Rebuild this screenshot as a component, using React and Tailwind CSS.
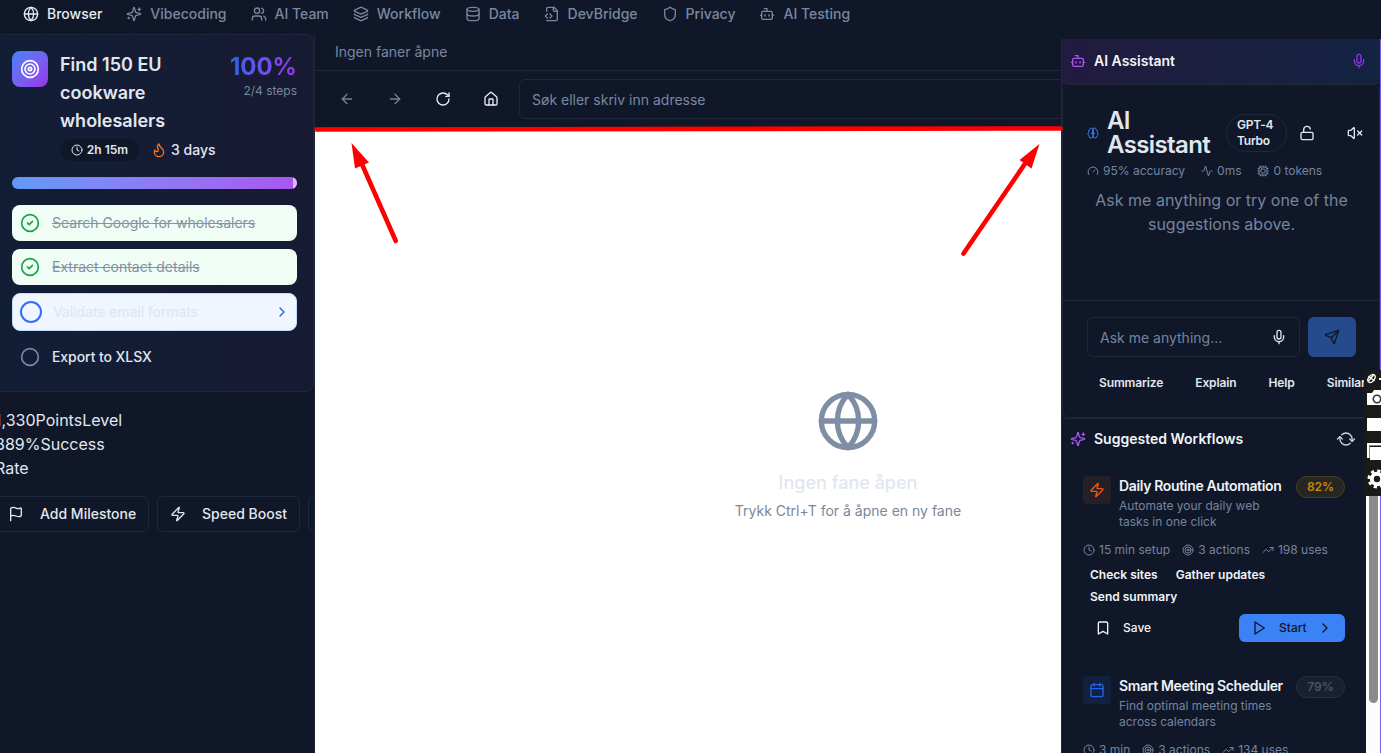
import React from "react";
import {
  Globe, Users, Layers, Database, Shield, Bot, Target, Clock, Flame,
  CircleCheck, Circle, ChevronRight, Flag, Zap, ArrowLeft, ArrowRight, RotateCw, Mic,
  LockOpen, VolumeX, Gauge, Activity, Cpu, Send, RefreshCw, TrendingUp, Bookmark, Calendar,
} from "lucide-react";

function Svg({ className, children }) {
  return (
    <svg viewBox="0 0 24 24" fill="none" stroke="currentColor" strokeWidth="2" strokeLinecap="round" strokeLinejoin="round" className={className}>
      {children}
    </svg>
  );
}

function Sparkles({ className }) {
  return (
    <Svg className={className}>
      <path d="M9.937 15.5A2 2 0 0 0 8.5 14.063l-6.135-1.582a.5.5 0 0 1 0-.962L8.5 9.936A2 2 0 0 0 9.937 8.5l1.582-6.135a.5.5 0 0 1 .963 0L14.063 8.5A2 2 0 0 0 15.5 9.937l6.135 1.581a.5.5 0 0 1 0 .964L15.5 14.063a2 2 0 0 0-1.437 1.437l-1.582 6.135a.5.5 0 0 1-.963 0z" />
      <path d="M20 3v4M22 5h-4M4 17v2M5 18H3" />
    </Svg>
  );
}

function FileCode({ className }) {
  return (
    <Svg className={className}>
      <path d="M4 22h14a2 2 0 0 0 2-2V7l-5-5H6a2 2 0 0 0-2 2v4" />
      <path d="M14 2v4a2 2 0 0 0 2 2h4M5 12l-3 3 3 3M9 18l3-3-3-3" />
    </Svg>
  );
}

function House({ className }) {
  return (
    <Svg className={className}>
      <path d="M15 21v-8a1 1 0 0 0-1-1h-4a1 1 0 0 0-1 1v8" />
      <path d="M3 10a2 2 0 0 1 .709-1.528l7-5.999a2 2 0 0 1 2.582 0l7 5.999A2 2 0 0 1 21 10v9a2 2 0 0 1-2 2H5a2 2 0 0 1-2-2z" />
    </Svg>
  );
}

function Brain({ className }) {
  return (
    <Svg className={className}>
      <path d="M12 5a3 3 0 1 0-5.997.125 4 4 0 0 0-2.526 5.77 4 4 0 0 0 .556 6.588A4 4 0 1 0 12 18Z" />
      <path d="M12 5a3 3 0 1 1 5.997.125 4 4 0 0 1 2.526 5.77 4 4 0 0 1-.556 6.588A4 4 0 1 1 12 18Z" />
      <path d="M15 13a4.5 4.5 0 0 1-3-4 4.5 4.5 0 0 1-3 4" />
    </Svg>
  );
}

function Play({ className }) {
  return (
    <Svg className={className}>
      <polygon points="6 3 20 12 6 21 6 3" />
    </Svg>
  );
}

const NAV = [
  [Globe, "Browser"], [Sparkles, "Vibecoding"], [Users, "AI Team"], [Layers, "Workflow"],
  [Database, "Data"], [FileCode, "DevBridge"], [Shield, "Privacy"], [Bot, "AI Testing"],
];

function TopNav() {
  return (
    <nav className="flex h-[34px] shrink-0 items-start gap-6 pl-[23px] pt-1 text-sm font-medium leading-5">
      {NAV.map(([Icon, label], i) => (
        <div key={label} className={i === 0 ? "flex items-center gap-2 text-[#e6ebf3]" : "flex items-center gap-2 text-[#7888a1]"}>
          <Icon className="size-4" />
          <span>{label}</span>
        </div>
      ))}
    </nav>
  );
}

function GoalCard() {
  return (
    <section className="flex h-[358px] w-[314px] flex-col rounded-r-lg border border-l-0 border-[#1d293b] bg-linear-to-r from-[#111e36] to-[#181a33] pl-3 pr-4 pt-4">
      <div className="flex items-start">
        <div className="flex size-9 shrink-0 items-center justify-center rounded-lg bg-linear-to-br from-[#3b82f6] to-[#9333ea] text-white">
          <Target className="size-5" />
        </div>
        <div className="ml-3 flex-1">
          <h2 className="w-[130px] text-lg font-semibold leading-7 text-[#e1e7ef]">Find 150 EU cookware wholesalers</h2>
          <div className="mt-1 flex items-center text-[#e1e7ef]">
            <span className="flex h-[22px] w-[79px] items-center justify-center gap-1 rounded-full bg-[#101728] text-xs font-semibold">
              <Clock className="size-3" />2h 15m
            </span>
            <span className="ml-3 flex items-center gap-1 text-sm font-medium">
              <Flame className="size-4 text-[#f97316]" />3 days
            </span>
          </div>
        </div>
        <div className="flex shrink-0 flex-col items-end">
          <span className="bg-linear-to-r from-[#2563eb] to-[#9333ea] bg-clip-text text-2xl font-bold leading-8 text-transparent">100%</span>
          <span className="text-xs leading-4 text-[#7888a1]">2/4 steps</span>
        </div>
      </div>
      <div className="mt-4 flex h-3 overflow-hidden rounded-full bg-linear-to-r from-[#609af8] to-[#a855f0]">
        <span className="ml-auto w-1 bg-[#dcb9f8]" />
      </div>
      <div className="mt-4 flex flex-col gap-2 text-sm leading-5">
        <div className="flex h-9 items-center gap-3 rounded-lg bg-[#f0fdf4] px-2 text-[#8591a7]">
          <CircleCheck className="size-5 text-[#16a34a]" /><span className="line-through">Search Google for wholesalers</span>
        </div>
        <div className="flex h-9 items-center gap-3 rounded-lg bg-[#f0fdf4] px-2 text-[#8591a7]">
          <CircleCheck className="size-5 text-[#16a34a]" /><span className="line-through">Extract contact details</span>
        </div>
        <div className="flex h-[38px] items-center rounded-lg border border-[#bfdbfe] bg-[#eff6ff] px-2 text-[#e1e7ef]">
          <span className="-ml-px size-[22px] rounded-full border-[2.5px] border-[#356fee]" /><span className="ml-[11px] font-medium tracking-[-0.01em]">Validate email formats</span>
          <ChevronRight className="-mr-0.5 ml-auto size-4 text-[#2563eb]" />
        </div>
        <div className="flex h-9 items-center gap-3 px-2 font-medium tracking-[-0.005em] text-[#e1e7ef]">
          <Circle className="size-5 text-[#7888a1]" /><span>Export to XLSX</span>
        </div>
      </div>
    </section>
  );
}

function LeftPanel() {
  return (
    <aside className="w-[315px] shrink-0 overflow-hidden border-r border-[#1a2637] text-[#e1e7ef]">
      <GoalCard />
      <div className="mt-4 text-base leading-6">
        <p className="-ml-[5px]"><span className="text-[#d99032]">1</span>,330PointsLevel</p>
        <p className="-ml-[5px]">889%Success</p>
        <p className="-ml-[5px]">Rate</p>
      </div>
      <div className="-ml-2 mt-4 flex gap-2 text-sm font-medium">
        <button className="flex h-9 w-[157px] shrink-0 items-center rounded-md border border-[#1d293b] pl-[15px]">
          <Flag className="size-4" /><span className="ml-4">Add Milestone</span>
        </button>
        <button className="flex h-9 w-[143px] shrink-0 items-center rounded-md border border-[#1d293b] pl-3">
          <Zap className="size-4" /><span className="ml-4">Speed Boost</span>
        </button>
        <button className="h-9 w-32 shrink-0 rounded-md border border-[#1d293b]" aria-label="More" />
      </div>
    </aside>
  );
}

function BrowserPane() {
  return (
    <main className="flex min-w-0 flex-1 flex-col overflow-hidden">
      <div className="flex h-[37px] shrink-0 items-center border-b border-[#1d293b] px-5 text-sm text-[#7888a1]">Ingen faner åpne</div>
      <div className="flex h-[57px] shrink-0 items-center border-b border-[#1d293b] pl-3">
        <span className="flex w-12 shrink-0 pl-3 text-[#778191]"><ArrowLeft className="size-4" /></span>
        <span className="flex w-12 shrink-0 pl-3 text-[#778191]"><ArrowRight className="size-4" /></span>
        <span className="flex w-12 shrink-0 pl-3 text-[#e8edf4]"><RotateCw className="size-4" /></span>
        <span className="flex w-12 shrink-0 pl-3 text-[#e8edf4]"><House className="size-4" /></span>
        <div className="flex h-10 w-[560px] shrink-0 items-center rounded-md border border-[#1d293b] px-3 pt-0.5 text-sm text-[#7888a1]">Søk eller skriv inn adresse</div>
      </div>
      <div className="flex flex-1 flex-col items-center bg-white pl-80 pt-[261px]">
        <Globe className="size-16 text-[#7f8ea5]" />
        <h3 className="mt-4 text-lg font-medium leading-7 text-[#e1e7ef]">Ingen fane åpen</h3>
        <p className="mt-1 text-sm leading-5 text-[#7b8799]">Trykk Ctrl+T for å åpne en ny fane</p>
      </div>
    </main>
  );
}

function AssistantCard() {
  return (
    <section className="flex h-[334px] flex-col rounded-lg border border-[#1d293b]">
      <div className="flex h-[215px] shrink-0 flex-col px-6 pt-6">
        <div className="flex h-12 items-center">
          <Brain className="size-3 shrink-0 text-[#3b82f6]" />
          <h2 className="ml-2 w-[105px] shrink-0 text-2xl font-semibold leading-none tracking-tight text-[#e1e7ef]">AI Assistant</h2>
          <span className="ml-[14px] flex h-[38px] w-[61px] shrink-0 items-center rounded-full border border-[#1d293b] pl-[10px] text-xs font-semibold leading-4 tracking-[-0.02em] text-[#e1e7ef]">GPT-4<br />Turbo</span>
          <LockOpen className="ml-3 size-4 shrink-0 text-[#e1e7ef]" />
          <VolumeX className="ml-8 size-4 shrink-0 text-[#e1e7ef]" />
        </div>
        <div className="mt-1.5 flex h-4 items-center gap-4 whitespace-nowrap text-xs text-[#7484a0]">
          <span className="flex items-center gap-1"><Gauge className="size-3" />95% accuracy</span>
          <span className="flex items-center gap-1"><Activity className="size-3" />0ms</span>
          <span className="flex items-center gap-1"><Cpu className="size-3" />0 tokens</span>
        </div>
        <p className="-mr-px ml-0 mt-[9px] text-center text-base leading-6 text-[#7484a0]">Ask me anything or try one of the suggestions above.</p>
      </div>
      <div className="border-t border-[#1d293b] px-6 pt-4">
        <div className="-mr-1 flex gap-2">
          <div className="flex h-10 w-[213px] shrink-0 items-center justify-between rounded-md border border-[#1d293b] px-3 text-sm text-[#7484a0]">
            <span className="pt-0.5">Ask me anything...</span><Mic className="size-4 text-[#e1e7ef]" />
          </div>
          <button className="flex h-10 w-12 shrink-0 items-center justify-center rounded-md bg-[#254b8e] text-[#101728]" aria-label="Send"><Send className="size-4" /></button>
        </div>
        <div className="mt-4 flex h-5 w-[278px] items-center gap-8 overflow-hidden whitespace-nowrap pl-3 text-xs font-semibold tracking-[-0.01em] text-[#e1e7ef]">
          <span>Summarize</span><span>Explain</span><span>Help</span><span>Similar</span>
        </div>
      </div>
    </section>
  );
}

function WorkflowHead({ icon, iconClass, title, text, badge, badgeClass }) {
  return (
    <div className="flex h-14 items-start">
      <span className={iconClass}>{icon}</span>
      <div className="ml-2 w-[177px] shrink-0">
        <h4 className="whitespace-nowrap text-sm font-semibold leading-5 tracking-tight text-[#eef2f7]">{title}</h4>
        <p className="mt-0.5 w-[165px] text-xs leading-4 text-[#7484a0]">{text}</p>
      </div>
      <span className={badgeClass}>{badge}</span>
    </div>
  );
}

function WorkflowMeta({ time, uses }) {
  return (
    <div className="flex h-4 items-center gap-3 whitespace-nowrap text-xs text-[#7484a0]">
      <span className="flex items-center gap-1"><Clock className="size-3" />{time}</span>
      <span className="flex items-center gap-1"><Target className="size-3" />3 actions</span>
      <span className="flex items-center gap-1"><TrendingUp className="size-3" />{uses}</span>
    </div>
  );
}

function Suggested() {
  return (
    <section className="flex min-h-0 flex-1 overflow-hidden">
      <div className="w-[304px] shrink-0 border-t border-[#1d293b]">
        <div className="flex h-10 items-center px-2">
          <Sparkles className="size-4 text-[#a855f7]" />
          <h3 className="ml-2 text-sm font-semibold text-[#f1f5f9]">Suggested Workflows</h3>
          <RefreshCw className="ml-auto mr-1 size-4 rotate-45 text-[#cbd5e1]" />
        </div>
        <div className="pl-[21px] pr-[21px] pt-[17px]">
          <WorkflowHead
            icon={<Zap className="size-4" />}
            iconClass="flex size-7 shrink-0 items-center justify-center rounded bg-[#261f28] text-[#ea580c]"
            title="Daily Routine Automation" text="Automate your daily web tasks in one click" badge="82%"
            badgeClass="flex h-[22px] w-[49px] shrink-0 items-center justify-center rounded-full border border-[#4a3d1e] bg-[#262624] text-xs font-semibold text-[#ca8a04]"
          />
          <div className="mt-[10px]"><WorkflowMeta time="15 min setup" uses="198 uses" /></div>
          <div className="mt-[6px] flex flex-wrap gap-x-[18px] pl-[7px] text-xs font-semibold leading-[22px] text-[#f1f5f9]">
            <span>Check sites</span><span>Gather updates</span><span>Send summary</span>
          </div>
          <div className="mt-1.5 flex h-7 items-center justify-between">
            <span className="flex items-center gap-3 pl-3 text-xs font-medium text-[#f1f5f9]"><Bookmark className="size-4" />Save</span>
            <button className="flex h-7 w-[106px] items-center rounded-md bg-[#3b82f6] pl-3 text-xs font-medium text-[#101728]">
              <Play className="size-4" /><span className="ml-3">Start</span><ChevronRight className="ml-2.5 size-4" />
            </button>
          </div>
          <div className="mt-[34px]">
            <WorkflowHead
              icon={<Calendar className="size-4" />}
              iconClass="flex size-7 shrink-0 items-center justify-center rounded bg-[#12213d] text-[#2563eb]"
              title="Smart Meeting Scheduler" text="Find optimal meeting times across calendars" badge="79%"
              badgeClass="flex h-[22px] w-[49px] shrink-0 items-center justify-center rounded-full border border-[#272f3d] bg-[#192130] text-xs font-semibold text-[#4b5563]"
            />
          </div>
          <div className="mt-[10px]"><WorkflowMeta time="3 min" uses="134 uses" /></div>
        </div>
      </div>
      <div className="flex-1 bg-[#fcfcfc] pl-[3px]"><div className="h-[285px] w-[9px] rounded-full bg-[#8b8b8b]" /></div>
    </section>
  );
}

function RightPanel() {
  return (
    <aside className="mt-[5px] flex w-80 shrink-0 flex-col border-l border-r border-l-[#1d293b] border-r-[#7c5ce0]">
      <header className="flex h-[45px] shrink-0 items-center border-b border-[#1d293b] bg-linear-to-r from-[#211b3e] to-[#132342] pl-2 pr-[13px]">
        <Bot className="size-4 text-[#a855f7]" />
        <span className="ml-2 text-sm font-semibold text-[#f1f5f9]">AI Assistant</span>
        <Mic className="ml-auto size-4 text-[#9333ea]" />
      </header>
      <AssistantCard />
      <Suggested />
    </aside>
  );
}

function CaptureTools() {
  return (
    <svg className="absolute left-[1364px] top-[370px]" width="17" height="126" viewBox="0 0 17 126">
      <path d="M0 3Q0 0 3 0H17V126H0Z" fill="#1a1a1a" />
      <g fill="none" stroke="#fff" strokeWidth="1.3"><ellipse cx="7.5" cy="8.5" rx="4.5" ry="2.8" transform="rotate(-50 7.5 8.5)" /><path d="M4.5 11L9.5 5M4.5 6l6 5" /></g>
      <path d="M15 8h2v2h-2z" fill="#fff" />
      <path d="M3 23h5l2-3h7v15H3z" fill="#fff" /><circle cx="13" cy="29" r="3.7" fill="#fff" stroke="#333" strokeWidth="1.6" />
      <path d="M3 48h14v13H3z" fill="#fff" />
      <path d="M3 73h14v2H6v13H3z" fill="#fff" /><path d="M5.5 75.5H17M5.5 75v13" stroke="#888" /><path d="M6 77h11v13H6z" fill="#fff" />
      <circle cx="13" cy="109" r="5.2" fill="none" stroke="#fff" strokeWidth="4" />
      <circle cx="13" cy="109" r="8" fill="none" stroke="#fff" strokeWidth="3" strokeDasharray="3.2 3.08" />
    </svg>
  );
}

function Annotations() {
  return (
    <svg className="pointer-events-none absolute left-0 top-0" width="1381" height="753" viewBox="0 0 1381 753">
      <g stroke="#f00" strokeWidth="4.6" strokeLinecap="round" fill="none">
        <path d="M316.5 129.5L1060.5 128.5" />
        <path d="M361 162L395.8 241" />
        <path d="M1025.5 163L963.5 253.5" />
      </g>
      <path d="M351.5 143L369 162.5L355 168.5Z" fill="#f00" />
      <path d="M1039.5 144L1031.5 168.5L1019.5 160Z" fill="#f00" />
    </svg>
  );
}

export default function App() {
  return (
    <div className="relative flex h-[753px] w-[1381px] flex-col overflow-hidden bg-[#101728] font-['Inter',sans-serif]">
      <TopNav />
      <div className="flex min-h-0 flex-1">
        <LeftPanel />
        <BrowserPane />
        <RightPanel />
      </div>
      <CaptureTools />
      <Annotations />
    </div>
  );
}
